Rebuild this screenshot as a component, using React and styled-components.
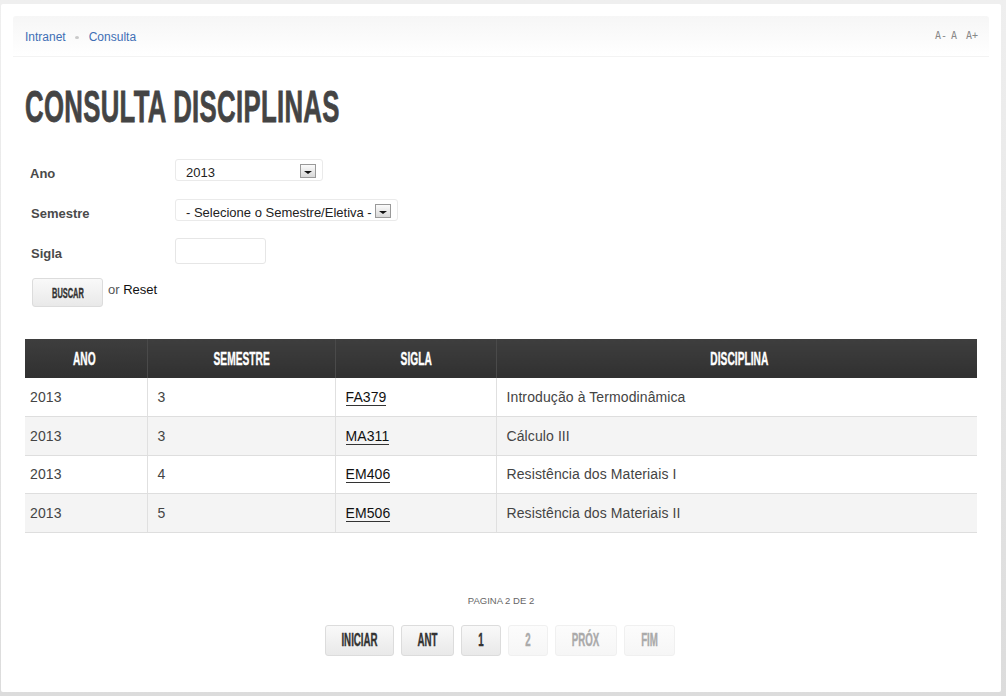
import React from 'react';
import styled, { createGlobalStyle } from 'styled-components';

const GlobalStyle = createGlobalStyle`
html, body { margin: 0; padding: 0; background: #e2e2e2; }
body { font-family: "Liberation Sans", Arial, sans-serif; }
`;

const Page = styled.div`
  width: 1006px;
  height: 696px;
  box-sizing: border-box;
  padding: 4px 5px 4px 1px;
  background: linear-gradient(#efefef, #dcdcdc);
  overflow: hidden;
`;

const Card = styled.div`
  height: 688px;
  box-sizing: border-box;
  background: #fff;
  padding: 12px 12px 0;
  border-radius: 2px;
`;

const Crumbs = styled.div`
  height: 41px;
  box-sizing: border-box;
  padding: 2px 12px 0;
  display: flex;
  align-items: center;
  justify-content: space-between;
  background: linear-gradient(#f6f6f6, #fff);
  border-bottom: 1px solid #f3f3f3;
  border-radius: 3px 3px 0 0;
  font-size: 12px;
`;

const CrumbList = styled.div`
  display: flex;
  align-items: center;
  color: #3f6fb5;
`;

const Dot = styled.span`
  width: 4px;
  height: 3px;
  margin: 0 10px 0 9px;
  border-radius: 50%;
  background: #c9c9c9;
`;

const Sizer = styled.div`
  display: flex;
  margin: -3px -1px 0 0;
  font-family: "DejaVu Sans Mono", monospace;
  font-size: 10px;
  color: #888;
  span:nth-child(2) { margin: 0 9px 0 4px; }
`;

const Content = styled.div`
  padding: 0 12px;
`;

// stands in for the tall condensed display face of the original
const Condensed = styled.span`
  display: inline-block;
  white-space: nowrap;
  font-weight: 700;
  font-size: ${p => p.$fs}px;
  transform: scaleX(${p => p.$scale || 0.56});
  -webkit-text-stroke: ${p => p.$stroke || 0.4}px currentColor;
`;

const Title = styled.h1`
  margin: 27px 0 0;
  height: 46px;
  font-size: 45px;
  line-height: 46px;
  font-weight: 700;
  letter-spacing: 0.55px;
  color: #444;
  white-space: nowrap;
  width: fit-content;
  transform: scaleX(0.572);
  transform-origin: left center;
  -webkit-text-stroke: 0.8px #444;
`;

const Form = styled.form`
  margin: 29px 0 0 5px;
  display: flex;
  flex-direction: column;
`;

const Row = styled.div`
  display: flex;
  align-items: center;
  height: ${p => p.$h}px;
  margin-bottom: ${p => p.$gap}px;
`;

const Label = styled.label`
  width: 145px;
  padding: ${p => p.$top}px 0 0 ${p => p.$nudge || 0}px;
  box-sizing: border-box;
  font-size: 13px;
  font-weight: 700;
  color: #4a4a4a;
`;

const Select = styled.div`
  width: ${p => p.$w}px;
  height: 22px;
  box-sizing: border-box;
  padding: 0 6px 0 10px;
  display: flex;
  align-items: center;
  justify-content: space-between;
  border: 1px solid #eaeaea;
  border-radius: 3px;
  font-size: 13px;
  color: #222;
  white-space: nowrap;
  background: #fff;
`;

const SelectText = styled.span`
  padding-top: 5px;
`;

const Arrow = styled.span`
  width: 16px;
  height: 14px;
  margin-top: 1px;
  box-sizing: border-box;
  border: 1px solid #999;
  background: linear-gradient(#fbfbfb, #d8d8d8);
  display: flex;
  align-items: center;
  justify-content: center;
  &::after {
    content: "";
    margin-top: 3px;
    border: 4px solid transparent;
    border-top: 3px solid #111;
    border-bottom: 0;
  }
`;

const Input = styled.input`
  width: 91px;
  height: 26px;
  box-sizing: border-box;
  border: 1px solid #e6e6e6;
  border-radius: 3px;
  background: #fff;
  padding: 0;
`;

const Actions = styled.div`
  display: flex;
  align-items: flex-start;
  margin-left: 2px;
  font-size: 13px;
  color: #555;
`;

const Button = styled.button`
  height: ${p => p.$h || 31}px;
  width: ${p => p.$w}px;
  box-sizing: border-box;
  padding: 0;
  display: flex;
  align-items: center;
  justify-content: center;
  font-family: inherit;
  border: 1px solid ${p => (p.$off ? '#f0f0f0' : '#dcdcdc')};
  border-radius: 3px;
  background: ${p => (p.$off ? 'linear-gradient(#fcfcfc, #f6f6f6)' : 'linear-gradient(#f9f9f9, #e9e9e9)')};
  color: ${p => (p.$off ? '#aaa' : '#333')};
`;

const ResetText = styled.span`
  margin: 4px 0 0 5px;
  b { font-weight: 400; color: #111; }
`;

const Table = styled.table`
  margin-top: 32px;
  width: 952px;
  border-collapse: collapse;
  table-layout: fixed;
  font-size: 14px;
  letter-spacing: 0.1px;
  color: #444;
`;

const Head = styled.th`
  height: 39px;
  padding: 0 ${p => (p.$shift < 0 ? -p.$shift : 0)}px 0 ${p => (p.$shift > 0 ? p.$shift : 0)}px;
  background: linear-gradient(#3e3e3e, #303030);
  border-left: 1px solid #4a4a4a;
  color: #fff;
  &:first-child { border-left: 0; }
`;

const Cell = styled.td`
  padding: 0 0 0 10px;
  border-left: 1px solid #e0e0e0;
  border-bottom: 1px solid #dedede;
  &:first-child { border-left: 0; padding-left: 5px; }
`;

const BodyRow = styled.tr`
  height: ${p => p.$h}px;
  background: ${p => (p.$alt ? '#f4f4f4' : '#fff')};
`;

const CodeLink = styled.a`
  color: #111;
  border-bottom: 1px solid #333;
`;

const Pager = styled.div`
  margin-top: 63px;
  display: flex;
  flex-direction: column;
  align-items: center;
`;

const PageInfo = styled.div`
  font-size: 9.5px;
  line-height: 10px;
  color: #666;
`;

const PagerButtons = styled.div`
  display: flex;
  gap: 7px;
  margin: 19px 2px 0 0;
`;

const rows = [
  ['2013', '3', 'FA379', 'Introdução à Termodinâmica', 38],
  ['2013', '3', 'MA311', 'Cálculo III', 39],
  ['2013', '4', 'EM406', 'Resistência dos Materiais I', 38],
  ['2013', '5', 'EM506', 'Resistência dos Materiais II', 39],
];

const pages = [
  ['INICIAR', 69], ['ANT', 53], ['1', 40],
  ['2', 40, true], ['PRÓX', 62, true], ['FIM', 51, true],
];

const headers = [['ANO', -2], ['SEMESTRE', 2], ['SIGLA', 2], ['DISCIPLINA', 6]];

export default function App() {
  return (
    <Page>
      <GlobalStyle />
      <Card>
        <Crumbs>
          <CrumbList>Intranet<Dot />Consulta</CrumbList>
          <Sizer><span>A-</span><span>A</span><span>A+</span></Sizer>
        </Crumbs>
        <Content>
          <Title>CONSULTA DISCIPLINAS</Title>
          <Form>
            <Row $h={22} $gap={18}>
              <Label $top={7}>Ano</Label>
              <Select $w={148}><SelectText>2013</SelectText><Arrow /></Select>
            </Row>
            <Row $h={22} $gap={17}>
              <Label $top={7} $nudge={1}>Semestre</Label>
              <Select $w={223}><SelectText>- Selecione o Semestre/Eletiva -</SelectText><Arrow /></Select>
            </Row>
            <Row $h={26} $gap={14}>
              <Label $top={5} $nudge={1}>Sigla</Label>
              <Input />
            </Row>
            <Actions>
              <Button type="button" $w={71} $h={29}><Condensed $fs={14} $scale={0.53}>BUSCAR</Condensed></Button>
              <ResetText>or <b>Reset</b></ResetText>
            </Actions>
          </Form>
          <Table>
            <colgroup>
              <col style={{ width: 122 }} />
              <col style={{ width: 188 }} />
              <col style={{ width: 161 }} />
              <col />
            </colgroup>
            <thead>
              <tr>
                {headers.map(([h, shift]) => (
                  <Head key={h} $shift={shift}><Condensed $fs={19} $scale={0.535}>{h}</Condensed></Head>
                ))}
              </tr>
            </thead>
            <tbody>
              {rows.map((r, i) => (
                <BodyRow key={r[2]} $alt={i % 2 === 1} $h={r[4]}>
                  <Cell>{r[0]}</Cell>
                  <Cell>{r[1]}</Cell>
                  <Cell><CodeLink>{r[2]}</CodeLink></Cell>
                  <Cell>{r[3]}</Cell>
                </BodyRow>
              ))}
            </tbody>
          </Table>
          <Pager>
            <PageInfo>PAGINA 2 DE 2</PageInfo>
            <PagerButtons>
              {pages.map(([label, w, off]) => (
                <Button type="button" key={label} $w={w} $off={off}>
                  <Condensed $fs={18} $scale={0.54}>{label}</Condensed>
                </Button>
              ))}
            </PagerButtons>
          </Pager>
        </Content>
      </Card>
    </Page>
  );
}
